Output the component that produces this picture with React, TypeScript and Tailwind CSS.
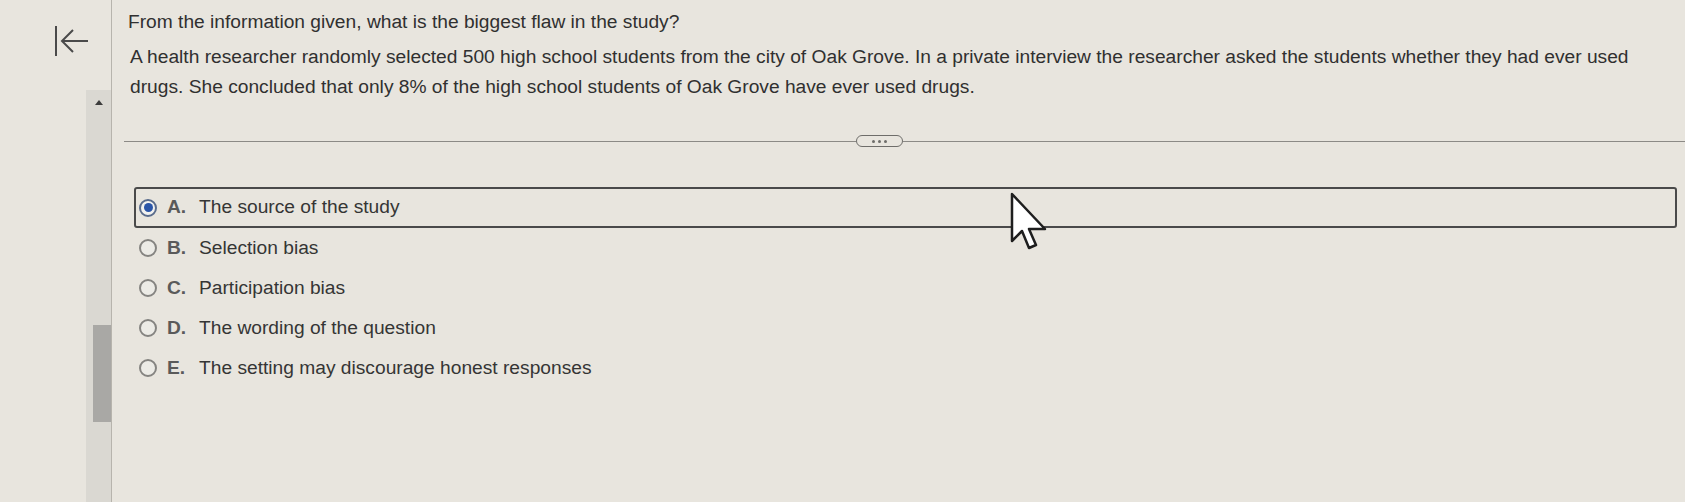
import React from "react";

const OPTIONS = [
  { key: "A", text: "The source of the study" },
  { key: "B", text: "Selection bias" },
  { key: "C", text: "Participation bias" },
  { key: "D", text: "The wording of the question" },
  { key: "E", text: "The setting may discourage honest responses" },
];

function Radio({ checked }: { checked: boolean }) {
  if (checked) {
    return (
      <span className="w-[18px] h-[18px] rounded-full border-2 border-[#5a6c8c] bg-[#f2f2f0] flex items-center justify-center shrink-0">
        <span className="w-[9px] h-[9px] rounded-full bg-[#2a55a8]" />
      </span>
    );
  }
  return <span className="w-[18px] h-[18px] rounded-full border-2 border-[#858481] bg-[#ecebe6] shrink-0" />;
}

export default function App() {
  const selected = "A";

  return (
    <div className="relative w-[1685px] h-[502px] overflow-hidden bg-[#e8e5de] flex font-['Liberation_Sans',Arial,sans-serif] text-[#303030]">
      {/* left rail */}
      <aside className="w-[112px] shrink-0 flex">
        <div className="w-[86px] pt-[26px] pl-[53px]">
          <svg width="36" height="30" viewBox="0 0 36 30" fill="none" stroke="#4a4a4a" strokeWidth="2">
            <path d="M3 0v30" />
            <path d="M9 15h26" />
            <path d="M20 4L9 15l11 11" />
          </svg>
        </div>
        <div className="w-[26px] flex flex-col border-r border-[#b7b4ad]">
          <div className="h-[90px]" />
          <div className="flex-1 bg-[#dad8d2] flex flex-col items-center pt-[10px]">
            <span className="w-0 h-0 border-l-[4px] border-r-[4px] border-b-[5px] border-l-transparent border-r-transparent border-b-[#3c3c3c]" />
            <div className="mt-[220px] ml-[6px] w-[18px] h-[97px] bg-[#a9a8a5]" />
          </div>
        </div>
      </aside>

      <main className="flex-1 pl-[16px] pt-[7px]">
        <p className="text-[19.2px] leading-[30px]">From the information given, what is the biggest flaw in the study?</p>
        <p className="mt-[5px] pl-[2px] pr-[35px] text-[19.2px] leading-[30px]">
          A health researcher randomly selected 500 high school students from the city of Oak Grove. In a private interview the
          researcher asked the students whether they had ever used drugs. She concluded that only 8% of the high school students
          of Oak Grove have ever used drugs.
        </p>

        {/* divider */}
        <div className="mt-[33px] -ml-[4px] flex items-center h-[12px]">
          <div className="w-[732px] h-px bg-[#8c8a86]" />
          <div className="w-[47px] h-[12px] rounded-full border border-[#6e6d6a] flex items-center justify-center gap-[3px]">
            <span className="w-[3px] h-[3px] rounded-full bg-[#6e6d6a]" />
            <span className="w-[3px] h-[3px] rounded-full bg-[#6e6d6a]" />
            <span className="w-[3px] h-[3px] rounded-full bg-[#6e6d6a]" />
          </div>
          <div className="flex-1 h-px bg-[#8c8a86]" />
        </div>

        {/* answers */}
        <div className="mt-[40px] flex flex-col pr-[8px]">
          {OPTIONS.map((o) => {
            const checked = o.key === selected;
            return (
              <div
                key={o.key}
                className={
                  checked
                    ? "ml-[6px] h-[41px] pl-[3px] flex items-center border-2 border-[#4a4a4a] rounded-[3px]"
                    : "ml-[6px] h-[40px] pl-[5px] flex items-center"
                }
              >
                <Radio checked={checked} />
                <span className="ml-[10px] w-[32px] text-[19.2px] font-bold text-[#5a5a5a]">{o.key}.</span>
                <span className="text-[19.2px] text-[#353535]">{o.text}</span>
              </div>
            );
          })}
        </div>
      </main>

      {/* mouse pointer */}
      <svg className="absolute left-[1010px] top-[192px]" width="40" height="60" viewBox="0 0 40 60">
        <path d="M2 2v47l10-10 7 17 7-3-7-16h16z" fill="#ffffff" stroke="#1e1e1e" strokeWidth="2.5" strokeLinejoin="round" />
      </svg>
    </div>
  );
}
